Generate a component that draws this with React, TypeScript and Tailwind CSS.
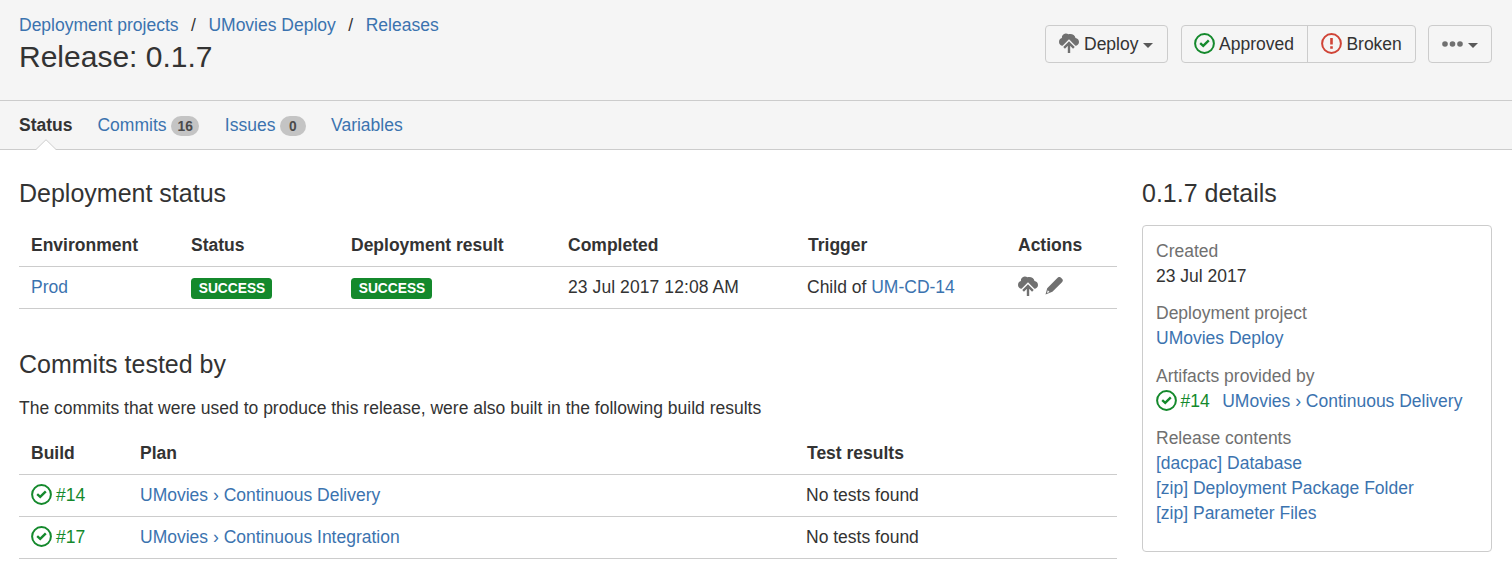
import React from "react";

const link = "text-[#3b73af]";

function DeployIcon({ className = "" }: { className?: string }) {
  return (
    <svg viewBox="0 0 20 20" className={`h-5 w-5 shrink-0 ${className}`} fill="none">
      <path
        d="M3.6 12.7C1.5 12.5 0 11 0 8.9 0 6.9 1.2 5.4 2.9 5 2.6 2.4 4.4.6 6.6.4c1.2-.1 2.1.3 2.8.9 3.2-.9 6.6.6 7.1 3.7C18.6 5.3 20 6.9 20 8.9c0 2.1-1.5 3.6-3.6 3.8L10 6.3Z"
        fill="#707070"
      />
      <path d="M10 20v-9M5.1 14.8 10 9.9l4.9 4.9" stroke="#707070" strokeWidth="2.4" />
    </svg>
  );
}

function PencilIcon() {
  return (
    <svg viewBox="0 0 18 18" className="h-[18px] w-[18px]" fill="#707070">
      <path d="M11.6 1.7 12.6.8a2.4 2.4 0 0 1 3.4 0l1 1a2.4 2.4 0 0 1 0 3.4L7.4 14.8.5 17.4 2.2 11.2ZM2.8 13.3 2 15.9 4.5 15Z" fillRule="evenodd" />
    </svg>
  );
}

function ApprovedIcon() {
  return (
    <svg viewBox="0 0 21 21" className="h-[21px] w-[21px] shrink-0" fill="none" stroke="#14892c">
      <circle cx="10.5" cy="10.5" r="9.4" strokeWidth="2" />
      <path d="m6.2 10.2 3 2.6 5.6-5.5" strokeWidth="2.4" />
    </svg>
  );
}

function BrokenIcon() {
  return (
    <svg viewBox="0 0 21 21" className="h-[21px] w-[21px] shrink-0" fill="none" stroke="#d04437">
      <circle cx="10.5" cy="10.5" r="9.4" strokeWidth="2" />
      <path d="M10.5 5v6.6M10.5 13.3v2.5" strokeWidth="2.6" />
    </svg>
  );
}

function Caret() {
  return (
    <svg viewBox="0 0 10 5" className="h-[5px] w-[10px]" fill="#595959">
      <path d="M0 0h10L5 5Z" />
    </svg>
  );
}

function Badge({ children }: { children: React.ReactNode }) {
  return (
    <span className="mt-[2px] flex h-5 items-center rounded-full bg-[#c4c4c4] px-[6.5px] text-[13.75px] font-bold text-[#4a4a4a]">
      {children}
    </span>
  );
}

function Lozenge() {
  return (
    <span className="mt-[3px] flex h-[21px] w-[81px] items-center justify-center rounded-[3.5px] bg-[#14892c] pl-px text-[13.75px] font-bold text-white">
      SUCCESS
    </span>
  );
}

function Th({ children, className = "py-0" }: { children: React.ReactNode; className?: string }) {
  return <th className={`h-[42px] px-3 text-left font-bold ${className}`}>{children}</th>;
}

function Td({ children, className = "pt-0 pb-px" }: { children: React.ReactNode; className?: string }) {
  return <td className={`h-[42px] px-3 ${className}`}>{children}</td>;
}

function BuildRow({ number, plan }: { number: string; plan: string }) {
  return (
    <tr className="border-b border-[#cccccc]">
      <Td>
        <span className="flex items-center gap-1 text-[#14892c]">
          <span className="-mt-[2px]"><ApprovedIcon /></span>
          {number}
        </span>
      </Td>
      <Td>
        <a className={link}>UMovies › {plan}</a>
      </Td>
      <Td>
        <span className="-ml-px">No tests found</span>
      </Td>
    </tr>
  );
}

export default function App() {
  return (
    <div className="h-[579px] overflow-hidden bg-white font-['Liberation_Sans',Arial,sans-serif] text-[17.5px] leading-[25px] text-[#333333]">
      <header className="flex h-[101px] justify-between border-b border-[#cccccc] bg-[#f5f5f5] pr-5 pl-[19px]">
        <div className="pt-[13px]">
          <nav className="flex">
            <a className={link}>Deployment projects</a>
            <span className="w-[29.9px] text-center">/</span>
            <a className={link}>UMovies Deploy</a>
            <span className="w-[29.9px] text-center">/</span>
            <a className={link}>Releases</a>
          </nav>
          <h1 className="text-[30px] leading-[38px]">Release: 0.1.7</h1>
        </div>
        <div className="flex h-[63px] pt-[25px]">
          <button className="flex h-[38px] w-[123px] items-center rounded-[4px] border border-[#cccccc] pl-[13px]">
            <DeployIcon className="-mt-[2px]" />
            <span className="ml-[5px]">Deploy</span>
            <span className="mt-[3px] ml-[5px]"><Caret /></span>
          </button>
          <div className="ml-[13px] flex h-[38px] w-[235px] rounded-[4px] border border-[#cccccc]">
            <button className="flex w-[126px] items-center gap-1 border-r border-[#cccccc] pl-3">
              <span className="-mt-px"><ApprovedIcon /></span>
              Approved
            </button>
            <button className="flex items-center gap-1 pl-[13.4px]">
              <span className="-mt-px"><BrokenIcon /></span>
              Broken
            </button>
          </div>
          <button className="ml-3 flex h-[38px] w-16 items-center gap-[5px] rounded-[4px] border border-[#cccccc] pl-[13px]">
            <svg viewBox="0 0 21 6" className="h-[6px] w-[21px]" fill="#707070">
              <circle cx="3" cy="3" r="2.8" />
              <circle cx="10.5" cy="3" r="2.8" />
              <circle cx="18" cy="3" r="2.8" />
            </svg>
            <span className="mt-[3px]"><Caret /></span>
          </button>
        </div>
      </header>

      <nav className="flex h-[49px] border-b border-[#cccccc] bg-[#f5f5f5] pl-[19px]">
        <div className="relative flex h-[49px] items-center">
          <span className="font-bold">Status</span>
          <svg viewBox="0 0 20 11" className="absolute bottom-0 left-[17px] h-[11px] w-5">
            <path d="M0 10.5 10 .5l10 10V11H0Z" fill="#fff" />
            <path d="M0 10.5 10 .7l10 9.8" fill="none" stroke="#cccccc" />
          </svg>
        </div>
        <a className={`ml-[25px] flex items-center gap-[4.5px] ${link}`}>
          Commits <Badge>16</Badge>
        </a>
        <a className={`ml-[25.5px] flex items-center gap-[4.5px] ${link}`}>
          Issues <Badge><span className="px-[2.5px]">0</span></Badge>
        </a>
        <a className={`ml-[25.5px] flex items-center ${link}`}>Variables</a>
      </nav>

      <div className="flex pl-[19px]">
        <main className="w-[1098px]">
          <h2 className="mt-[28px] text-[25px] leading-[31px]">Deployment status</h2>
          <table className="mt-[15px] w-full table-fixed border-collapse">
            <colgroup>
              <col className="w-[160px]" />
              <col className="w-[160px]" />
              <col className="w-[217px]" />
              <col className="w-[240px]" />
              <col className="w-[210px]" />
              <col />
            </colgroup>
            <thead>
              <tr className="border-b border-[#cccccc]">
                <Th className="pt-[2px] pb-0">Environment</Th>
                <Th className="pt-[2px] pb-0">Status</Th>
                <Th className="pt-[2px] pb-0">Deployment result</Th>
                <Th className="pt-[2px] pb-0">Completed</Th>
                <Th className="pt-[2px] pb-0">Trigger</Th>
                <Th className="pt-[2px] pb-0">Actions</Th>
              </tr>
            </thead>
            <tbody>
              <tr className="border-b border-[#cccccc]">
                <Td className="pt-px pb-0"><a className={link}>Prod</a></Td>
                <Td><Lozenge /></Td>
                <Td><Lozenge /></Td>
                <Td className="pt-px pb-0"><span className="tracking-[0.08px]">23 Jul 2017 12:08 AM</span></Td>
                <Td className="pt-px pb-0"><span className="-ml-px">Child of <a className={link}>UM-CD-14</a></span></Td>
                <Td>
                  <span className="-mt-px flex items-center gap-[7px]">
                    <DeployIcon />
                    <PencilIcon />
                  </span>
                </Td>
              </tr>
            </tbody>
          </table>

          <h2 className="mt-10 text-[25px] leading-[31px]">Commits tested by</h2>
          <p className="mt-4">
            The commits that were used to produce this release, were also built in the following build results
          </p>
          <table className="mt-[12px] w-full table-fixed border-collapse">
            <colgroup>
              <col className="w-[109px]" />
              <col className="w-[667px]" />
              <col />
            </colgroup>
            <thead>
              <tr className="border-b border-[#cccccc]">
                <Th>Build</Th>
                <Th>Plan</Th>
                <Th>Test results</Th>
              </tr>
            </thead>
            <tbody>
              <BuildRow number="#14" plan="Continuous Delivery" />
              <BuildRow number="#17" plan="Continuous Integration" />
            </tbody>
          </table>
        </main>

        <aside className="ml-[25px] w-[350px]">
          <h2 className="mt-[28px] text-[25px] leading-[31px]">0.1.7 details</h2>
          <dl className="mt-4 h-[327px] rounded-[4px] border border-[#cccccc] px-[13px] pt-[13px]">
            <dt className="text-[#707070]">Created</dt>
            <dd>23 Jul 2017</dd>
            <dt className="mt-3 text-[#707070]">Deployment project</dt>
            <dd className={link}>UMovies Deploy</dd>
            <dt className="mt-[13px] text-[#707070]">Artifacts provided by</dt>
            <dd className="flex h-[25px] items-center">
              <span className="-mt-[2px]"><ApprovedIcon /></span>
              <span className="ml-[3.5px] text-[#14892c]">#14</span>
              <a className={`ml-[12.5px] ${link}`}>UMovies › Continuous Delivery</a>
            </dd>
            <dt className="mt-3 text-[#707070]">Release contents</dt>
            <dd className={link}>[dacpac] Database</dd>
            <dd className={link}>[zip] Deployment Package Folder</dd>
            <dd className={link}>[zip] Parameter Files</dd>
          </dl>
        </aside>
      </div>
    </div>
  );
}
